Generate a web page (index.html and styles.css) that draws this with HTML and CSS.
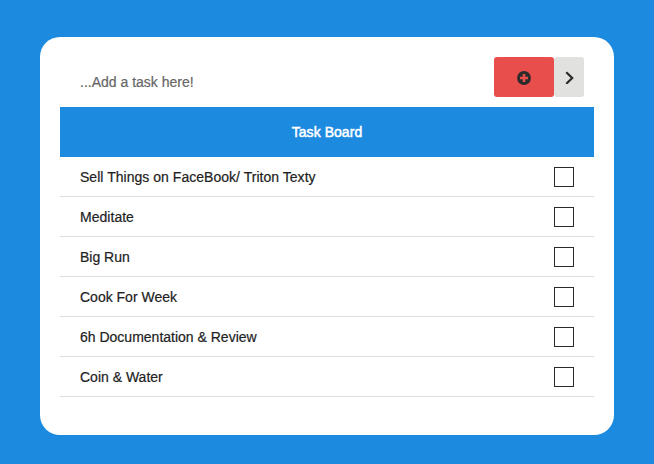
FILE: index.html
```html
<!DOCTYPE html>
<html lang="en">
<head>
<meta charset="utf-8">
<title>Task Board</title>
<link rel="stylesheet" href="styles.css">
</head>
<body>
<main class="card">
  <div class="toolbar">
    <div class="entry">...Add a task here!</div>
    <button class="add" aria-label="Add"><svg width="14" height="16" viewBox="0 0 14 16"><circle cx="7" cy="9" r="6.9" fill="#2b2b2b"/><path d="M7 5v8M3 9h8" stroke="#e74e4c" stroke-width="2.6"/></svg></button>
    <button class="next" aria-label="Next"><svg width="10" height="14" viewBox="0 0 10 14"><path d="M2.3 2.2L8.2 8L2.3 13.8" fill="none" stroke="#2b2b2b" stroke-width="2.2"/></svg></button>
  </div>
  <h1 class="title">Task Board</h1>
  <ul class="tasks">
    <li><span class="wide">Sell Things on FaceBook/ Triton Texty</span><i class="box"></i></li>
    <li><span class="wide">Meditate</span><i class="box"></i></li>
    <li><span>Big Run</span><i class="box"></i></li>
    <li><span>Cook For Week</span><i class="box"></i></li>
    <li><span>6h Documentation &amp; Review</span><i class="box"></i></li>
    <li><span>Coin &amp; Water</span><i class="box"></i></li>
  </ul>
</main>
</body>
</html>
```
FILE: styles.css
```css
* { box-sizing: border-box; }
body { margin: 0; height: 464px; padding: 37px 40px 29px; background: #1b8adf; font: 14px/20px "Liberation Sans", Arial, sans-serif; color: #222; -webkit-text-stroke: 0.2px; }
.card { width: 574px; height: 398px; padding: 20px; background: #fff; border-radius: 20px; }
.toolbar { display: flex; height: 50px; padding: 0 10px 10px 20px; }
.entry { flex: 1; padding-top: 15px; color: #666; }
button { height: 40px; padding: 0; border: 0; border-radius: 3px; display: flex; align-items: center; justify-content: center; }
.add { width: 60px; background: #e74e4c; }
.next { width: 30px; background: #e1e1e0; }
.title { margin: 0; height: 50px; background: #1b8adf; color: #fff; font-size: 14px; font-weight: 400; line-height: 50px; letter-spacing: 0.05px; text-align: center; -webkit-text-stroke: 0.5px; }
.tasks { margin: 0; padding: 0; list-style: none; }
.tasks li { display: flex; justify-content: space-between; align-items: center; height: 40px; padding: 0 20px; border-bottom: 1px solid #ddd; }
.wide { letter-spacing: 0.03px; }
.box { width: 20px; height: 20px; border: 1px solid #2b2b2b; }
```
